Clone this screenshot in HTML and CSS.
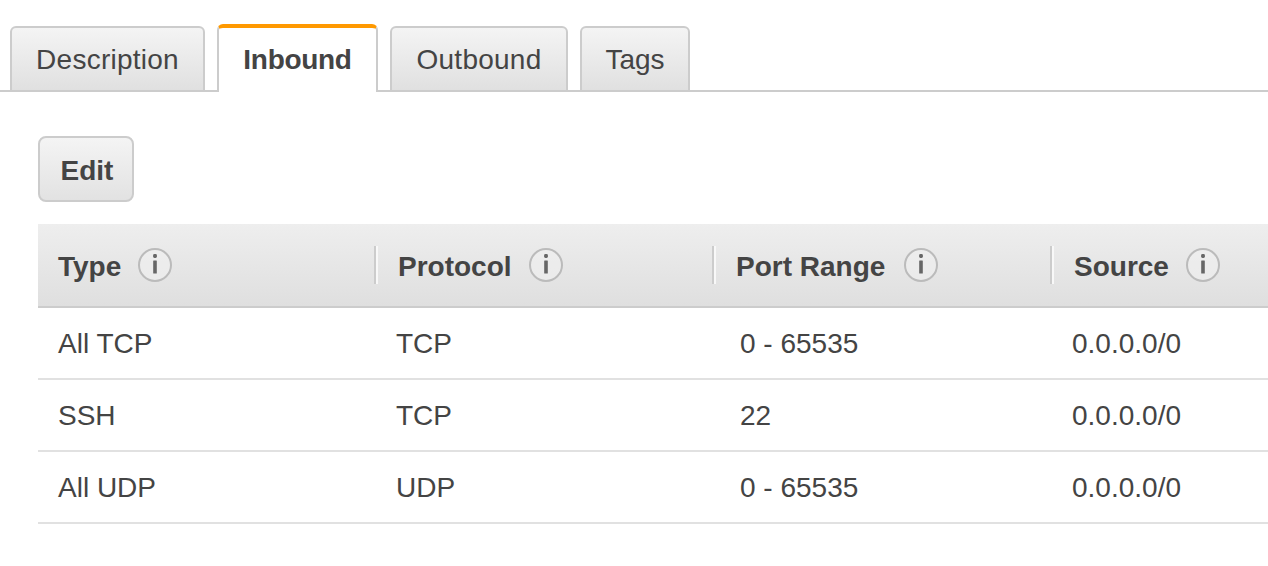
FILE: index.html
```html
<!DOCTYPE html>
<html lang="en">
<head>
<meta charset="utf-8">
<title>Inbound</title>
<link rel="stylesheet" href="styles.css">
</head>
<body>
<svg class="defs" width="0" height="0" aria-hidden="true">
  <symbol id="info" viewBox="0 0 36 36">
    <circle cx="18" cy="18" r="16" fill="#f1f1f1" fill-opacity=".5" stroke="#bbb" stroke-width="2"/>
    <rect x="16.100" y="7" width="3.800" height="4" rx="1.400" fill="#666"/>
    <rect x="16.200" y="13.500" width="3.600" height="13" rx=".5" fill="#666"/>
  </symbol>
</svg>
<nav class="tabs">
  <a class="tab tab-desc">Description</a>
  <a class="tab tab-active">Inbound</a>
  <a class="tab tab-outbound">Outbound</a>
  <a class="tab tab-tags">Tags</a>
</nav>
<main class="panel">
  <button class="edit" type="button">Edit</button>
  <div class="rules">
    <div class="head">
      <div class="hcell hcell-type"><span class="hlabel">Type</span><svg class="info"><use href="#info"/></svg></div>
      <div class="hcell"><span class="hlabel">Protocol</span><svg class="info"><use href="#info"/></svg></div>
      <div class="hcell hcell-port"><span class="hlabel">Port Range</span><svg class="info"><use href="#info"/></svg></div>
      <div class="hcell"><span class="hlabel">Source</span><svg class="info"><use href="#info"/></svg></div>
    </div>
    <div class="row"><span>All TCP</span><span>TCP</span><span>0 - 65535</span><span>0.0.0.0/0</span></div>
    <div class="row"><span>SSH</span><span>TCP</span><span>22</span><span>0.0.0.0/0</span></div>
    <div class="row"><span>All UDP</span><span>UDP</span><span>0 - 65535</span><span>0.0.0.0/0</span></div>
  </div>
</main>
</body>
</html>
```
FILE: styles.css
```css
* { box-sizing: border-box; }
html, body { margin: 0; padding: 0; background: #fff; }
body {
  width: 1268px;
  height: 566px;
  overflow: hidden;
  font-family: "Liberation Sans", Arial, sans-serif;
  font-size: 28px;
  color: #444;
}
.defs { position: absolute; }
.tabs {
  display: flex;
  align-items: flex-end;
  height: 92px;
  padding: 24px 0 0 10px;
  border-bottom: 2px solid #ccc;
}
.tab {
  display: flex;
  align-items: center;
  justify-content: center;
  width: 195px;
  height: 66px;
  margin-bottom: -2px;
  padding-top: 2px;
  margin-right: 12px;
  border: 2px solid #ccc;
  border-radius: 6px 6px 0 0;
  background: linear-gradient(#f4f4f4, #e0e0e0);
}
.tab-desc { letter-spacing: .25px; }
.tab-active {
  width: 161px;
  height: 68px;
  padding-top: 0;
  border-top: 4px solid #f90;
  border-bottom: 0;
  background: #fff;
  font-weight: 700;
  letter-spacing: -.3px;
}
.tab-outbound { width: 178px; letter-spacing: .25px; }
.tab-tags { width: 110px; margin-right: 0; }
.panel { padding: 44px 0 0 38px; }
.edit {
  display: block;
  width: 96px;
  height: 66px;
  padding: 4px 0 0 2px;
  border: 2px solid #ccc;
  border-radius: 8px;
  background: linear-gradient(#f4f4f4, #e2e2e2);
  font: 700 28px "Liberation Sans", Arial, sans-serif;
  color: #444;
}
.rules { margin-top: 22px; }
.head {
  display: grid;
  grid-template-columns: 336px 338px 338px 1fr;
  align-items: center;
  height: 84px;
  border-bottom: 2px solid #ccc;
  background: linear-gradient(#eeeeee, #dfdfdf);
}
.hcell {
  display: flex;
  align-items: center;
  height: 38px;
  padding-left: 22px;
  font-weight: 700;
  border-left: 2px solid #ccc;
  box-shadow: inset 2px 0 0 #f8f8f8;
}
.hcell-type { padding-left: 20px; border-left: 0; box-shadow: none; }
.hlabel { padding-top: 4px; }
.info { width: 36px; height: 36px; margin-left: 16px; }
.hcell-port .info { margin-left: 18px; }
.row {
  display: grid;
  grid-template-columns: 338px 344px 332px 1fr;
  align-items: center;
  height: 72px;
  padding-top: 2px;
  border-bottom: 2px solid #e1e1e1;
}
.row span { padding-left: 20px; }
```
